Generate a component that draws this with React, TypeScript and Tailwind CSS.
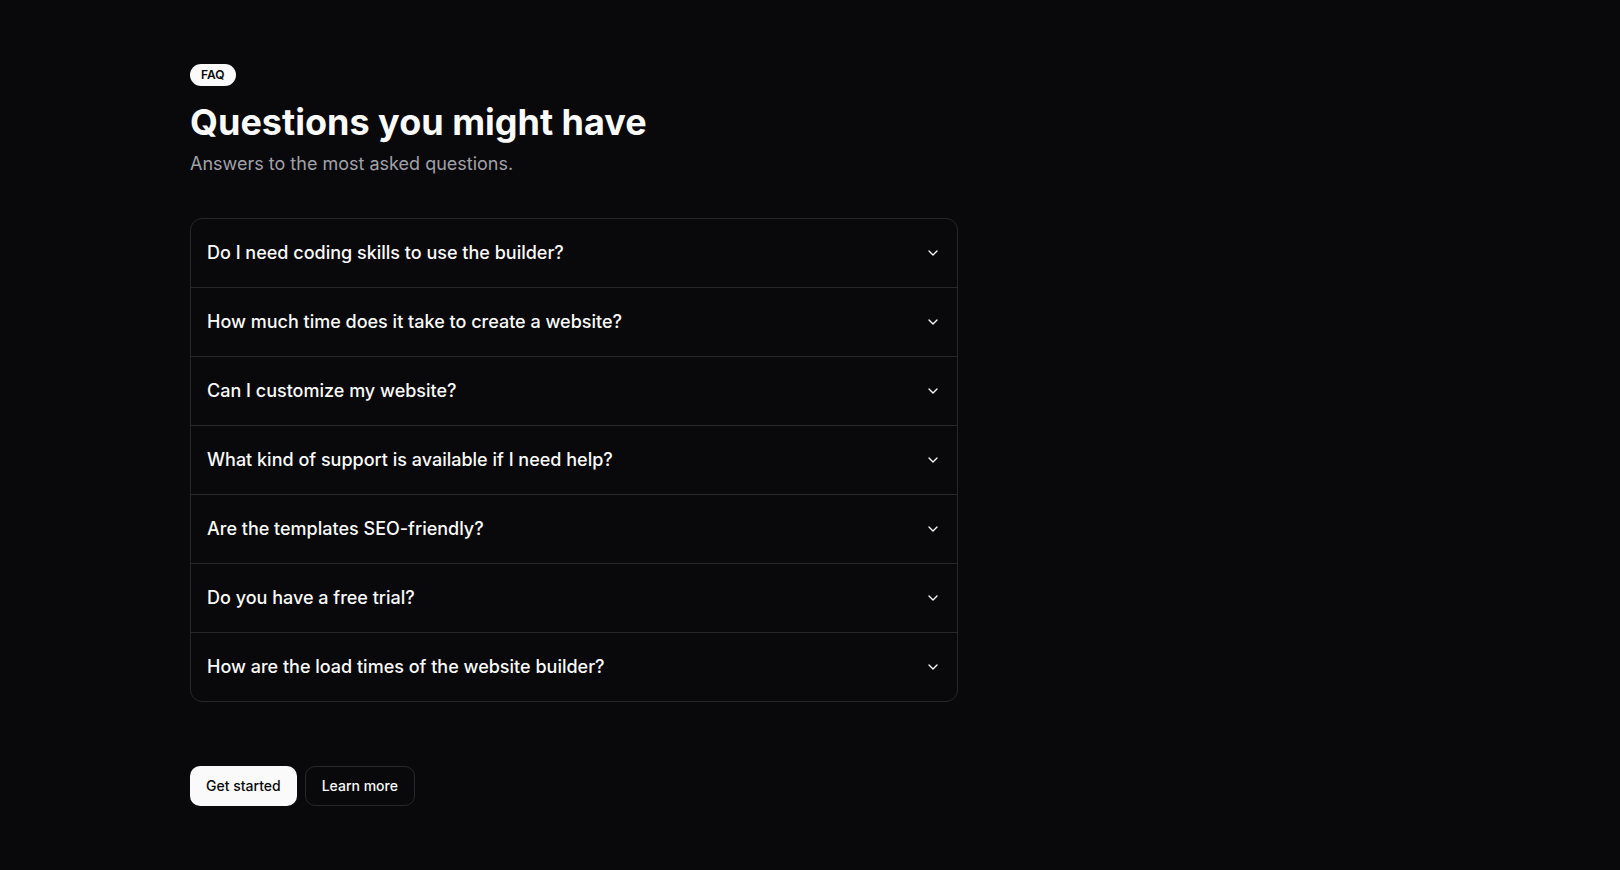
import React from "react";
import { ChevronDown } from "lucide-react";

const questions = [
  "Do I need coding skills to use the builder?",
  "How much time does it take to create a website?",
  "Can I customize my website?",
  "What kind of support is available if I need help?",
  "Are the templates SEO-friendly?",
  "Do you have a free trial?",
  "How are the load times of the website builder?",
];

export default function App() {
  return (
    <div
      className="min-h-[870px] w-full bg-[#09090b] text-[#fafafa]"
      style={{ fontFamily: "Inter, 'Noto Sans', sans-serif" }}
    >
      <div className="pl-[190px] pt-[61px]">
        <span className="inline-flex items-center rounded-full border border-transparent bg-[#fafafa] px-2.5 py-0.5 text-xs font-semibold text-[#09090b]">
          FAQ
        </span>
        <h1 className="mt-4 text-4xl font-bold leading-10">
          Questions you might have
        </h1>
        <p className="mt-2 text-lg leading-7 text-[#a1a1aa]">
          Answers to the most asked questions.
        </p>
        <div className="mt-10 w-[768px] overflow-hidden rounded-xl border border-[#27272a]">
          {questions.map((q, i) => (
            <div
              key={i}
              className={
                "flex items-center justify-between px-4 py-5 " +
                (i < questions.length - 1 ? "border-b border-[#27272a]" : "")
              }
            >
              <span className="text-lg font-medium leading-7">{q}</span>
              <ChevronDown className="h-4 w-4 text-[#fafafa]" strokeWidth={2} />
            </div>
          ))}
        </div>
        <div className="mt-16 flex gap-2">
          <button className="h-10 rounded-[10px] bg-[#fafafa] px-4 text-sm font-medium text-[#09090b]">
            Get started
          </button>
          <button className="h-10 rounded-[10px] border border-[#27272a] bg-[#09090b] px-4 text-sm font-medium text-[#fafafa]">
            Learn more
          </button>
        </div>
      </div>
    </div>
  );
}
